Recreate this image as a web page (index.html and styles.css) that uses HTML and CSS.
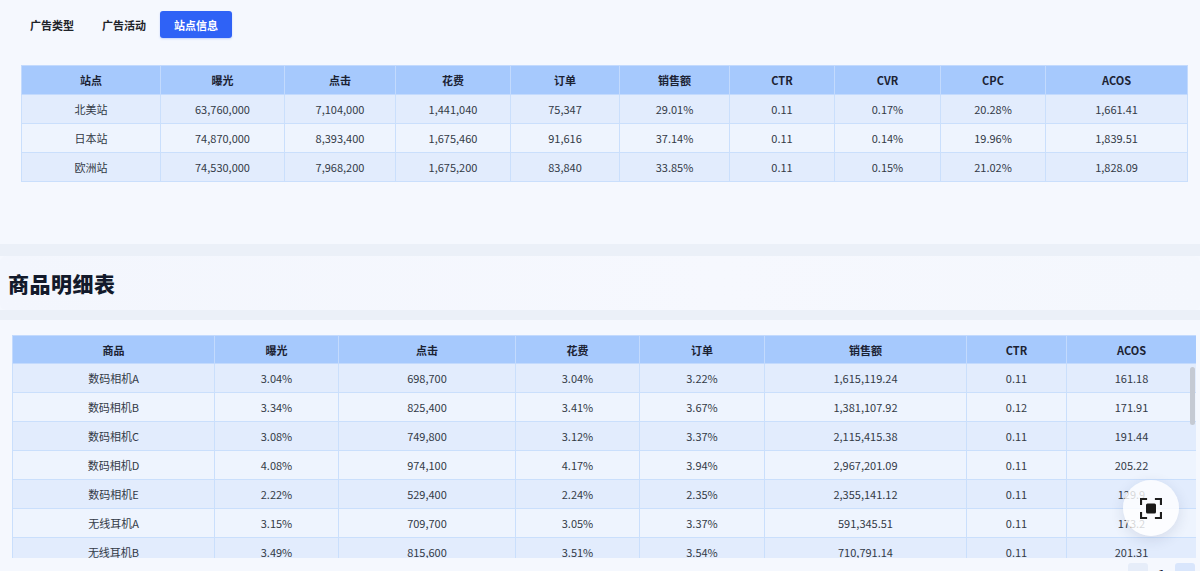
FILE: index.html
```html
<!DOCTYPE html>
<html lang="zh-CN">
<head>
<meta charset="utf-8">
<title>站点信息</title>
<link rel="stylesheet" href="styles.css">
</head>
<body>
<div class="top">
  <div class="tabs">
    <div class="tab">广告类型</div>
    <div class="tab">广告活动</div>
    <div class="tab active">站点信息</div>
  </div>
  <table class="grid site">
    <colgroup>
      <col style="width:139px"><col style="width:124px"><col style="width:111px"><col style="width:115px"><col style="width:109px"><col style="width:110px"><col style="width:105px"><col style="width:106px"><col style="width:105px"><col style="width:142px">
    </colgroup>
    <thead>
      <tr><th>站点</th><th>曝光</th><th>点击</th><th>花费</th><th>订单</th><th>销售额</th><th>CTR</th><th>CVR</th><th>CPC</th><th>ACOS</th></tr>
    </thead>
    <tbody>
      <tr><td>北美站</td><td>63,760,000</td><td>7,104,000</td><td>1,441,040</td><td>75,347</td><td>29.01%</td><td>0.11</td><td>0.17%</td><td>20.28%</td><td>1,661.41</td></tr>
      <tr><td>日本站</td><td>74,870,000</td><td>8,393,400</td><td>1,675,460</td><td>91,616</td><td>37.14%</td><td>0.11</td><td>0.14%</td><td>19.96%</td><td>1,839.51</td></tr>
      <tr><td>欧洲站</td><td>74,530,000</td><td>7,968,200</td><td>1,675,200</td><td>83,840</td><td>33.85%</td><td>0.11</td><td>0.15%</td><td>21.02%</td><td>1,828.09</td></tr>
    </tbody>
  </table>
</div>
<div class="band band-a"></div>
<div class="title-panel"><h2 class="title">商品明细表</h2></div>
<div class="band band-b"></div>
<div class="bottom">
  <div class="table-wrap">
    <table class="grid goods">
      <colgroup>
        <col style="width:202px"><col style="width:124px"><col style="width:177px"><col style="width:124px"><col style="width:125px"><col style="width:202px"><col style="width:100px"><col style="width:130px">
      </colgroup>
      <thead>
        <tr><th>商品</th><th>曝光</th><th>点击</th><th>花费</th><th>订单</th><th>销售额</th><th>CTR</th><th>ACOS</th></tr>
      </thead>
      <tbody>
        <tr><td>数码相机A</td><td>3.04%</td><td>698,700</td><td>3.04%</td><td>3.22%</td><td>1,615,119.24</td><td>0.11</td><td>161.18</td></tr>
        <tr><td>数码相机B</td><td>3.34%</td><td>825,400</td><td>3.41%</td><td>3.67%</td><td>1,381,107.92</td><td>0.12</td><td>171.91</td></tr>
        <tr><td>数码相机C</td><td>3.08%</td><td>749,800</td><td>3.12%</td><td>3.37%</td><td>2,115,415.38</td><td>0.11</td><td>191.44</td></tr>
        <tr><td>数码相机D</td><td>4.08%</td><td>974,100</td><td>4.17%</td><td>3.94%</td><td>2,967,201.09</td><td>0.11</td><td>205.22</td></tr>
        <tr><td>数码相机E</td><td>2.22%</td><td>529,400</td><td>2.24%</td><td>2.35%</td><td>2,355,141.12</td><td>0.11</td><td>129.9</td></tr>
        <tr><td>无线耳机A</td><td>3.15%</td><td>709,700</td><td>3.05%</td><td>3.37%</td><td>591,345.51</td><td>0.11</td><td>173.2</td></tr>
        <tr><td>无线耳机B</td><td>3.49%</td><td>815,600</td><td>3.51%</td><td>3.54%</td><td>710,791.14</td><td>0.11</td><td>201.31</td></tr>
      </tbody>
    </table>
    <div class="thumb"></div>
  </div>
  <div class="pager">
    <span class="pg pg-prev">‹</span>
    <span class="pg-num">1</span>
    <span class="pg pg-next">›</span>
  </div>
</div>
<div class="fab">
  <svg width="22" height="21" viewBox="0 0 22 21" fill="none">
    <path d="M1 6V1H6M16 1H21V6M21 15V20H16M6 20H1V15" stroke="#1f1f1f" stroke-width="2.2" stroke-linecap="square"/>
    <rect x="6" y="5.5" width="10" height="10" rx="1.5" fill="#1a1a1a"/>
  </svg>
</div>
</body>
</html>
```
FILE: styles.css
```css
* { box-sizing: border-box; }
html, body {
  margin: 0;
  padding: 0;
  height: 571px;
  overflow: hidden;
  background: #f5f8fe;
  font-family: "Noto Sans CJK SC", "Noto Sans", sans-serif;
  font-size: 11px;
  color: #333a46;
}
.top {
  height: 244px;
  padding-top: 11px;
}
.tabs {
  display: flex;
  padding-left: 16px;
}
.tab {
  width: 72px;
  height: 27px;
  display: flex;
  align-items: center;
  justify-content: center;
  font-weight: 700;
  font-size: 11px;
  color: #1f2329;
  border-radius: 3px;
}
.active {
  background: #2f62f6;
  color: #fff;
  box-shadow: 0 1px 2px rgba(47, 98, 246, 0.25);
}
.grid {
  border-collapse: collapse;
  table-layout: fixed;
  border: 1px solid #bfd7fb;
}
.grid th,
.grid td {
  height: 29px;
  padding: 0 0 1px;
  text-align: center;
  border: 1px solid #cadffc;
  white-space: nowrap;
  overflow: hidden;
}
.grid th {
  padding: 0;
  background: #a6c9fd;
  color: #1b2233;
  font-weight: 700;
  border-color: #c3dafd;
}
.grid tbody tr:nth-child(odd) td { background: #e2ecfd; }
.grid tbody tr:nth-child(even) td { background: #eef4fe; }
.site {
  width: 1166px;
  margin: 27px 0 0 21px;
}
.band { background: #ebf0f8; }
.band-a { height: 12px; }
.band-b { height: 10px; }
.title-panel {
  height: 54px;
  display: flex;
  align-items: center;
  padding-left: 8px;
  border-radius: 6px;
  background: linear-gradient(90deg, #f3f6fd 0%, #f6f8fe 60%, #f4f7fd 100%);
}
.title {
  margin: 0;
  font-size: 21px;
  font-weight: 900;
  color: #131a2b;
  letter-spacing: 0.5px;
}
.bottom {
  padding: 15px 4px 0 12px;
}
.table-wrap {
  position: relative;
  height: 223px;
  overflow: hidden;
  width: 1184px;
}
.goods { width: 1184px; }
.goods th { height: 28px; }
.thumb {
  position: absolute;
  top: 32px;
  right: 1px;
  width: 5px;
  height: 58px;
  border-radius: 3px;
  background: #c5cad3;
}
.pager {
  display: flex;
  justify-content: flex-end;
  align-items: center;
  gap: 8px;
  padding-right: 1px;
  margin-top: 5px;
}
.pg {
  width: 20px;
  height: 20px;
  display: flex;
  align-items: center;
  justify-content: center;
  border-radius: 3px;
  font-size: 14px;
  font-weight: 700;
}
.pg-prev { background: #e6edf9; color: #c2c8d2; }
.pg-next { background: #d9e6fc; color: #2f4c8a; }
.pg-num { font-size: 12px; font-weight: 700; color: #1b2233; padding: 0 2px; }
.fab {
  position: fixed;
  right: 21px;
  bottom: 35px;
  width: 56px;
  height: 56px;
  border-radius: 50%;
  background: rgba(255, 255, 255, 0.8);
  box-shadow: 0 4px 14px rgba(30, 50, 90, 0.12);
  display: flex;
  align-items: center;
  justify-content: center;
}
```
